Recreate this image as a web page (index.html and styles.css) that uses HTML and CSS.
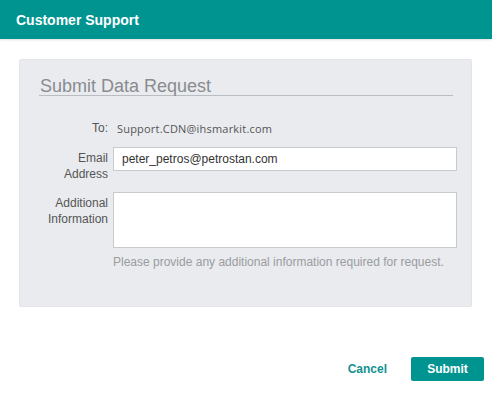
FILE: index.html
```html
<!DOCTYPE html>
<html lang="en">
<head>
  <meta charset="UTF-8">
  <title>Customer Support</title>
  <link rel="stylesheet" href="styles.css">
</head>
<body>
  <div class="modal">
    <div class="modal-header">Customer Support</div>

    <div class="modal-body">
      <div class="panel">
        <h2 class="panel-title">Submit Data Request</h2>

        <div class="row row-to">
          <div class="label">To:</div>
          <div class="value">Support.CDN@ihsmarkit.com</div>
        </div>

        <div class="row row-email">
          <div class="label">Email<br>Address</div>
          <input class="field" type="text" value="peter_petros@petrostan.com">
        </div>

        <div class="row row-info">
          <div class="label">Additional<br>Information</div>
          <div class="field-wrap">
            <textarea class="field area"></textarea>
            <div class="hint">Please provide any additional information required for request.</div>
          </div>
        </div>
      </div>
    </div>

    <div class="modal-footer">
      <button class="btn btn-link">Cancel</button>
      <button class="btn btn-primary">Submit</button>
    </div>
  </div>
</body>
</html>
```

FILE: styles.css
```css
body {
  margin: 0;
  background: #fff;
  font-family: "Liberation Sans", Arial, sans-serif;
  color: #555;
}

.modal {
  width: 492px;
  height: 397px;
  display: flex;
  flex-direction: column;
}

.modal-header {
  height: 39px;
  box-sizing: border-box;
  padding: 12px 16px 0;
  background: #009491;
  color: #fff;
  font-size: 14px;
  font-weight: bold;
  box-shadow: 0 1px 2px rgba(0, 0, 0, 0.12);
}

.modal-body {
  padding: 20px 20px 0 19px;
}

/* Panel gris */
.panel {
  height: 248px;
  box-sizing: border-box;
  padding: 17px 18px 0 19px;
  background: #e9ebef;
  border: 1px solid #e3e5e9;
  border-radius: 2px;
}

.panel-title {
  margin: 0;
  padding: 0 0 0 1px;
  font-size: 18px;
  font-weight: normal;
  line-height: 18px;
  color: #8a8c90;
  border-bottom: 1px solid #b9bcc0;
}

.row {
  display: flex;
  align-items: flex-start;
}

.row-to {
  margin-top: 25px;
  margin-bottom: 2px;
}

.row-email {
  margin-top: 11px;
}

.row-info {
  margin-top: 10px;
}

.label {
  width: 69px;
  flex: none;
  text-align: right;
  font-size: 12px;
  line-height: 16px;
  color: #555;
  padding-top: 3px;
}

.row-to .label {
  padding-top: 0;
  line-height: 15px;
}

.value {
  margin-left: 9px;
  font-family: "Open Sans", sans-serif;
  font-size: 11px;
  letter-spacing: 0.2px;
  line-height: 15px;
  color: #555;
}

.field {
  flex: none;
  margin: 0 0 0 5px;
  width: 344px;
  height: 24px;
  box-sizing: border-box;
  padding: 0 8px;
  border: 1px solid #c8cacd;
  background: #fff;
  font-family: "Liberation Sans", Arial, sans-serif;
  font-size: 12px;
  color: #333;
  border-radius: 0;
}

.field-wrap {
  flex: none;
  display: flex;
  flex-direction: column;
}

.area {
  height: 56px;
  resize: none;
  display: block;
}

.hint {
  margin: 7px 0 0 5px;
  font-size: 12px;
  color: #9a9ca0;
}

.modal-footer {
  display: flex;
  justify-content: flex-end;
  align-items: center;
  gap: 24px;
  padding: 50px 8px 0 0;
}

.btn {
  font-family: "Liberation Sans", Arial, sans-serif;
  font-size: 12px;
  font-weight: bold;
  cursor: pointer;
  border: none;
  border-radius: 2px;
}

.btn-link {
  background: transparent;
  color: #12918f;
  padding: 0;
}

.btn-primary {
  width: 73px;
  height: 24px;
  background: #009491;
  color: #fff;
}
```
